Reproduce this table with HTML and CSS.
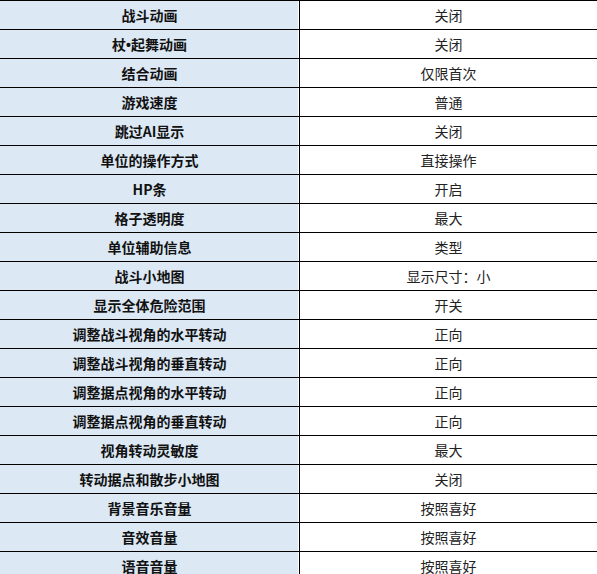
FILE: index.html
```html
<!DOCTYPE html>
<html lang="zh-CN">
<head>
<meta charset="utf-8">
<title>设置</title>
<link rel="stylesheet" href="styles.css">
</head>
<body>
<table class="settings">
<tbody>
<tr><td class="key">战斗动画</td><td class="val">关闭</td></tr>
<tr><td class="key">杖<span class="dot">•</span>起舞动画</td><td class="val">关闭</td></tr>
<tr><td class="key">结合动画</td><td class="val">仅限首次</td></tr>
<tr><td class="key">游戏速度</td><td class="val">普通</td></tr>
<tr><td class="key">跳过AI显示</td><td class="val">关闭</td></tr>
<tr><td class="key">单位的操作方式</td><td class="val">直接操作</td></tr>
<tr><td class="key">HP条</td><td class="val">开启</td></tr>
<tr><td class="key">格子透明度</td><td class="val">最大</td></tr>
<tr><td class="key">单位辅助信息</td><td class="val">类型</td></tr>
<tr><td class="key">战斗小地图</td><td class="val">显示尺寸：小</td></tr>
<tr><td class="key">显示全体危险范围</td><td class="val">开关</td></tr>
<tr><td class="key">调整战斗视角的水平转动</td><td class="val">正向</td></tr>
<tr><td class="key">调整战斗视角的垂直转动</td><td class="val">正向</td></tr>
<tr><td class="key">调整据点视角的水平转动</td><td class="val">正向</td></tr>
<tr><td class="key">调整据点视角的垂直转动</td><td class="val">正向</td></tr>
<tr><td class="key">视角转动灵敏度</td><td class="val">最大</td></tr>
<tr><td class="key">转动据点和散步小地图</td><td class="val">关闭</td></tr>
<tr><td class="key">背景音乐音量</td><td class="val">按照喜好</td></tr>
<tr><td class="key">音效音量</td><td class="val">按照喜好</td></tr>
<tr><td class="key">语音音量</td><td class="val">按照喜好</td></tr>
</tbody>
</table>
</body>
</html>
```

FILE: styles.css
```css
html, body {
  margin: 0;
  padding: 0;
  background: #ffffff;
}

body {
  font-family: "Noto Sans CJK SC", "Noto Sans", "Liberation Sans", sans-serif;
  font-size: 14px;
  color: #1a1a1a;
}

.settings {
  width: 597px;
  border-collapse: collapse;
  table-layout: fixed;
  border-top: 1px solid #000;
}

.settings td {
  height: 28px;
  padding: 0;
  text-align: center;
  vertical-align: middle;
  border-bottom: 1px solid #000;
  line-height: 28px;
  white-space: nowrap;
}

.key {
  width: 299px;
  background: #dce8f4;
  font-weight: 700;
  color: #111;
  border-right: 1px solid #000;
  box-shadow: inset -1px 0 0 #ffffff;
}

.dot {
  font-family: "Liberation Sans", sans-serif;
  line-height: 0;
}

.val {
  font-weight: 400;
  color: #222;
}
```
